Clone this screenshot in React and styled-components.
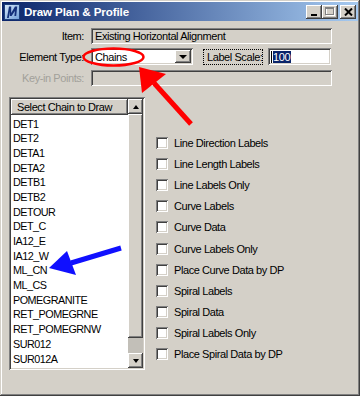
import styled, { createGlobalStyle } from 'styled-components';

const GlobalStyle = createGlobalStyle`
  html, body {
    margin: 0;
    padding: 0;
    background: #d4d0c8;
  }
  body {
    font-family: "Liberation Sans", Arial, sans-serif;
  }
  * {
    box-sizing: border-box;
  }
`;

const chains = [
  'DET1', 'DET2', 'DETA1', 'DETA2', 'DETB1', 'DETB2', 'DETOUR', 'DET_C',
  'IA12_E', 'IA12_W', 'ML_CN', 'ML_CS', 'POMEGRANITE', 'RET_POMEGRNE',
  'RET_POMEGRNW', 'SUR012', 'SUR012A',
];

const options = [
  'Line Direction Labels', 'Line Length Labels', 'Line Labels Only',
  'Curve Labels', 'Curve Data', 'Curve Labels Only', 'Place Curve Data by DP',
  'Spiral Labels', 'Spiral Data', 'Spiral Labels Only', 'Place Spiral Data by DP',
];

const raised = `
  box-shadow: inset -1px -1px #404040, inset 1px 1px #ffffff,
    inset -2px -2px #808080, inset 2px 2px #d4d0c8;
`;

const sunken = `
  box-shadow: inset 1px 1px #808080, inset -1px -1px #ffffff,
    inset 2px 2px #404040, inset -2px -2px #d4d0c8;
`;

const Window = styled.div`
  position: relative;
  width: 360px;
  height: 396px;
  padding: 2px;
  background: #d4d0c8;
  box-shadow: inset -1px -1px #404040, inset 1px 1px #d4d0c8,
    inset -2px -2px #808080, inset 2px 2px #ffffff;
  display: flex;
  flex-direction: column;
  font-size: 11px;
  letter-spacing: -0.42px;
  color: #000;
`;

const TitleBar = styled.div`
  height: 19px;
  display: flex;
  align-items: center;
  padding: 0 2px;
  background: linear-gradient(to right, #0a246a, #a6caf0);
`;

const TitleText = styled.span`
  margin-left: 4px;
  color: #fff;
  font-weight: bold;
  font-size: 11.6px;
  letter-spacing: -0.1px;
  white-space: nowrap;
`;

const TitleButtons = styled.div`
  margin-left: auto;
  display: flex;
  align-items: center;
`;

const CaptionButton = styled.div`
  width: 16px;
  height: 14px;
  margin-left: ${(p) => p.$gap || 0}px;
  background: #d4d0c8;
  ${raised}
  display: flex;
  align-items: center;
  justify-content: center;
`;

const Body = styled.div`
  flex: 1;
  display: flex;
  flex-direction: column;
  padding: 7px 0 0 7px;
`;

const FieldRow = styled.div`
  display: flex;
  align-items: center;
  height: ${(p) => p.$h || 16}px;
  margin-top: ${(p) => p.$mt || 0}px;
`;

const FieldLabel = styled.span`
  width: 75px;
  margin-right: 7px;
  text-align: right;
  white-space: nowrap;
  color: ${(p) => (p.$disabled ? '#a2a09a' : '#000')};
`;

const TextBox = styled.div`
  width: ${(p) => p.$w}px;
  height: 100%;
  background: ${(p) => p.$bg || '#fff'};
  ${sunken}
  display: flex;
  align-items: center;
  padding: 0 4px;
  white-space: nowrap;
  overflow: hidden;
`;

const Select = styled(TextBox)`
  padding: 0 2px 0 4px;
`;

const DropButton = styled.div`
  margin-left: auto;
  width: 16px;
  height: 13px;
  background: #d4d0c8;
  ${raised}
  display: flex;
  align-items: center;
  justify-content: center;

  &::after {
    content: '';
    border-left: 4px solid transparent;
    border-right: 4px solid transparent;
    border-top: 4px solid #000;
  }
`;

const FocusLabel = styled.div`
  margin-left: 10px;
  width: 60px;
  height: 16px;
  border: 1px dotted #000;
  display: flex;
  align-items: center;
  padding-left: 3px;
  white-space: nowrap;
`;

const ScaleBox = styled(TextBox)`
  margin-left: 5px;
  padding: 0 3px;
`;

const Caret = styled.span`
  width: 1px;
  height: 12px;
  background: #000;
  margin-right: 1px;
`;

const Selected = styled.span`
  background: #0a246a;
  color: #fff;
  line-height: 12px;
  padding-right: 1px;
`;

const Lower = styled.div`
  display: flex;
  margin-top: 11px;
`;

const ListBox = styled.div`
  width: 136px;
  height: 273px;
  padding: 2px;
  background: #fff;
  ${sunken}
  display: grid;
  grid-template-columns: 1fr 15px;
  grid-template-rows: 16px 1fr;
`;

const ListHeader = styled.div`
  background: #d4d0c8;
  ${raised}
  display: flex;
  align-items: center;
  padding-left: 6px;
  white-space: nowrap;
`;

const ListItems = styled.div`
  padding: 1.5px 0 0 2px;
  overflow: hidden;
  font-size: 10.8px;
  letter-spacing: -0.5px;
`;

const ListItem = styled.div`
  height: 14.7px;
  line-height: 14.7px;
  white-space: nowrap;
`;

const ScrollBar = styled.div`
  grid-column: 2;
  grid-row: 1 / span 2;
  display: flex;
  flex-direction: column;
`;

const ScrollArrow = styled.div`
  height: 15px;
  background: #d4d0c8;
  ${raised}
  display: flex;
  align-items: center;
  justify-content: center;

  &::after {
    content: '';
    border-left: 3.5px solid transparent;
    border-right: 3.5px solid transparent;
    ${(p) => (p.$up ? 'border-bottom' : 'border-top')}: 4px solid #000;
  }
`;

const Thumb = styled.div`
  height: 224px;
  background: #d4d0c8;
  ${raised}
`;

const Track = styled.div`
  flex: 1;
  background: #c2bfb8;
`;

const CheckColumn = styled.div`
  display: flex;
  flex-direction: column;
  margin-left: 11px;
  padding-top: 35.5px;
`;

const CheckRow = styled.label`
  height: 21.1px;
  display: flex;
  align-items: center;
  gap: 6px;
  white-space: nowrap;
`;

const CheckBox = styled.span`
  width: 12px;
  height: 12px;
  background: #fff;
  ${sunken}
`;

const Overlay = styled.svg`
  position: absolute;
  left: 0;
  top: 0;
  pointer-events: none;
`;

function AppIcon() {
  return (
    <svg width="16" height="16" viewBox="0 0 16 16">
      <defs>
        <linearGradient id="ic" x1="0" y1="0" x2="1" y2="1">
          <stop offset="0" stopColor="#d8e8fa" />
          <stop offset="1" stopColor="#6f9fd8" />
        </linearGradient>
      </defs>
      <rect x="0.5" y="0.5" width="15" height="15" fill="url(#ic)" stroke="#1c3f7c" />
      <path d="M3 14 L5 2.5 L7.2 2.5 L7.2 9 L11 2.5 L13.2 2.5 L12.2 12 L10.4 12 L10.9 7 L7.6 12 L5.8 12 L5.8 7.5 L4.8 14 Z" fill="#13307a" />
    </svg>
  );
}

export default function App() {
  return (
    <>
      <GlobalStyle />
      <Window>
        <TitleBar>
          <AppIcon />
          <TitleText>Draw Plan &amp; Profile</TitleText>
          <TitleButtons>
            <CaptionButton>
              <svg width="8" height="8" viewBox="0 0 8 8">
                <rect x="1" y="6" width="6" height="2" fill="#000" />
              </svg>
            </CaptionButton>
            <CaptionButton>
              <svg width="10" height="9" viewBox="0 0 10 9">
                <rect x="1.5" y="1.5" width="8" height="7" fill="none" stroke="#fff" />
                <rect x="0.5" y="0.5" width="8" height="7" fill="none" stroke="#808080" />
                <rect x="1" y="1" width="7" height="1" fill="#808080" />
              </svg>
            </CaptionButton>
            <CaptionButton $gap={2}>
              <svg width="9" height="8" viewBox="0 0 9 8">
                <path d="M1 0.5 L8 7.5 M8 0.5 L1 7.5" stroke="#000" strokeWidth="2" />
              </svg>
            </CaptionButton>
          </TitleButtons>
        </TitleBar>

        <Body>
          <FieldRow>
            <FieldLabel>Item:</FieldLabel>
            <TextBox $w={241} $bg="#d4d0c8">Existing Horizontal Alignment</TextBox>
          </FieldRow>
          <FieldRow $h={17} $mt={4}>
            <FieldLabel>Element Type:</FieldLabel>
            <Select $w={102}>
              Chains
              <DropButton />
            </Select>
            <FocusLabel>Label Scale:</FocusLabel>
            <ScaleBox $w={63}>
              <Caret />
              <Selected>100</Selected>
            </ScaleBox>
          </FieldRow>
          <FieldRow $mt={5}>
            <FieldLabel $disabled>Key-in Points:</FieldLabel>
            <TextBox $w={241} $bg="#d4d0c8" />
          </FieldRow>

          <Lower>
            <ListBox>
              <ListHeader>Select Chain to Draw</ListHeader>
              <ScrollBar>
                <ScrollArrow $up />
                <Thumb />
                <Track />
                <ScrollArrow />
              </ScrollBar>
              <ListItems>
                {chains.map((c) => (
                  <ListItem key={c}>{c}</ListItem>
                ))}
              </ListItems>
            </ListBox>
            <CheckColumn>
              {options.map((o) => (
                <CheckRow key={o}>
                  <CheckBox />
                  {o}
                </CheckRow>
              ))}
            </CheckColumn>
          </Lower>
        </Body>

        <Overlay width="360" height="396" viewBox="0 0 360 396">
          <ellipse cx="113.5" cy="57" rx="30" ry="8.5" fill="none" stroke="#ff0000" strokeWidth="2.5" />
          <line x1="154" y1="83" x2="191" y2="124" stroke="#ff0000" strokeWidth="5" />
          <polygon points="139,67 142,93 166,74" fill="#ff0000" />
          <line x1="71" y1="263" x2="121" y2="248" stroke="#1010ff" strokeWidth="5" />
          <polygon points="49,268 67,251 76,275" fill="#1010ff" />
        </Overlay>
      </Window>
    </>
  );
}
